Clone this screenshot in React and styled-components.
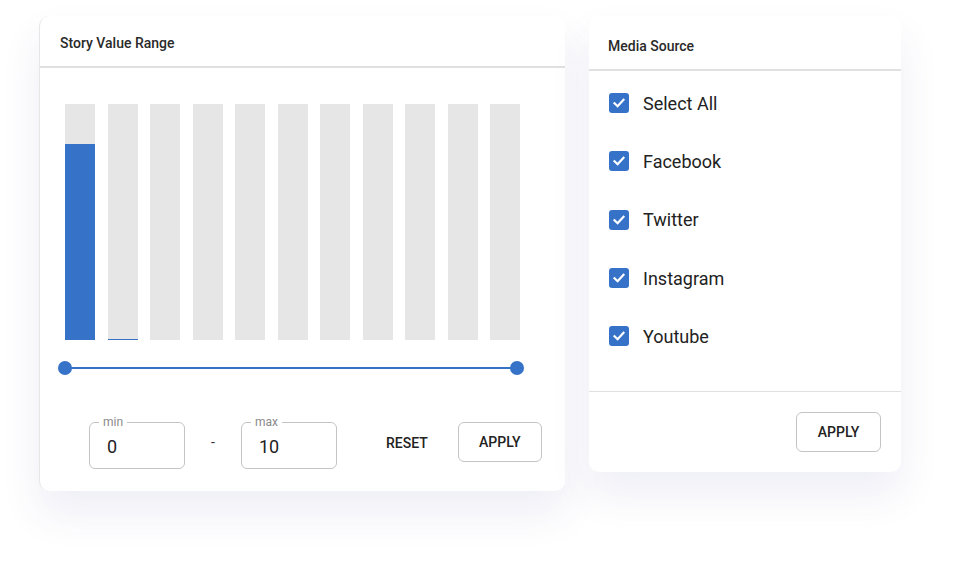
import React from "react";
import styled, { createGlobalStyle } from "styled-components";

const Global = createGlobalStyle`
  html, body { margin: 0; padding: 0; background: #ffffff; }
  body { font-family: Roboto, "Noto Sans", Arial, sans-serif; color: #222; }
  * { box-sizing: border-box; }
`;

const Page = styled.div`
  display: flex;
  align-items: flex-start;
  gap: 24px;
  padding: 16px 0 0 39px;
  width: 963px;
  height: 576px;
`;

const Card = styled.section`
  background: #fff;
  border-radius: 10px;
  width: ${(p) => p.$w}px;
  height: ${(p) => p.$h}px;
  box-shadow: 0 22px 40px rgba(70, 70, 150, 0.09);
  display: flex;
  flex-direction: column;
  border-left: ${(p) => (p.$edge ? "1px solid #e6e6e6" : "none")};
`;

const Header = styled.header`
  height: ${(p) => p.$h}px;
  flex: none;
  display: flex;
  align-items: center;
  padding-left: ${(p) => p.$pl}px;
  padding-top: ${(p) => p.$pt || 0}px;
  border-bottom: 2px solid #e0e0e0;
  font-size: 14px;
  font-weight: 500;
  color: #2a2a2a;
`;

const ChartArea = styled.div`
  padding: 36px 0 0 25px;
  width: 481px;
`;

const Bars = styled.div`
  display: flex;
  justify-content: space-between;
  width: 455px;
  height: 236px;
`;

const Bar = styled.div`
  width: 30px;
  height: 100%;
  background: #e6e6e6;
  display: flex;
  flex-direction: column;
  justify-content: flex-end;
`;

const Fill = styled.div`
  width: 100%;
  background: #3572c8;
`;

const Slider = styled.div`
  position: relative;
  margin-top: 21px;
  width: 452px;
  height: 14px;
  display: flex;
  align-items: center;
`;

const Track = styled.div`
  flex: 1;
  height: 2px;
  background: #3572c8;
`;

const Thumb = styled.span`
  position: absolute;
  top: 0;
  left: ${(p) => p.$x}px;
  width: 14px;
  height: 14px;
  margin-left: -7px;
  border-radius: 50%;
  background: #3572c8;
`;

const Controls = styled.div`
  display: flex;
  align-items: flex-start;
  margin-top: 41px;
  padding-left: 49px;
`;

const Field = styled.fieldset`
  margin: 0;
  padding: 0 0 0 17px;
  width: 96px;
  height: 53px;
  border: 1px solid #c4c4c4;
  border-radius: 6px;
  display: flex;
  align-items: center;
  font-size: 18px;
  color: #222;
`;

const Legend = styled.legend`
  font-size: 12px;
  color: #8a8a8a;
  padding: 0 4px;
  margin-left: -8px;
  line-height: 12px;
`;

const Value = styled.span`
  margin-top: -3px;
`;

const Dash = styled.span`
  width: 56px;
  text-align: center;
  font-size: 14px;
  color: #333;
  margin-top: 18px;
`;

const TextButton = styled.button`
  border: none;
  background: none;
  font-family: inherit;
  font-size: 14px;
  font-weight: 500;
  color: #222;
  padding: 0;
  margin: 19px 30px 0 49px;
`;

const OutlineButton = styled.button`
  width: ${(p) => p.$w}px;
  height: 40px;
  border: 1px solid #c4c4c4;
  border-radius: 6px;
  background: #fff;
  font-family: inherit;
  font-size: 14px;
  font-weight: 500;
  color: #222;
  margin-top: ${(p) => p.$mt || 0}px;
`;

const List = styled.ul`
  list-style: none;
  margin: 0;
  padding: 3px 0 26px 20px;
`;

const Item = styled.li`
  height: 58.3px;
  display: flex;
  align-items: center;
  gap: 14px;
  font-size: 18px;
  color: #222;
`;

const Box = styled.span`
  width: 20px;
  height: 20px;
  border-radius: 3px;
  background: #3572c8;
  display: flex;
  align-items: center;
  justify-content: center;
  flex: none;
`;

const Footer = styled.footer`
  border-top: 1px solid #e0e0e0;
  display: flex;
  justify-content: flex-end;
  padding: 20px 20px 0 0;
`;

const bars = [196 / 236, 1 / 236, 0, 0, 0, 0, 0, 0, 0, 0, 0];
const sources = ["Select All", "Facebook", "Twitter", "Instagram", "Youtube"];

const Check = () => (
  <svg width="14" height="14" viewBox="0 0 14 14">
    <path d="M2.5 7.2 L5.6 10.2 L11.5 3.8" fill="none" stroke="#fff" strokeWidth="2.2" strokeLinecap="square" />
  </svg>
);

export default function App() {
  return (
    <>
      <Global />
      <Page>
        <Card $w={526} $h={475} $edge>
          <Header $h={52} $pl={20} $pt={3}>Story Value Range</Header>
          <ChartArea>
            <Bars>
              {bars.map((v, i) => (
                <Bar key={i}>
                  <Fill style={{ height: `${v * 100}%` }} />
                </Bar>
              ))}
            </Bars>
            <Slider>
              <Track />
              <Thumb $x={0} />
              <Thumb $x={452} />
            </Slider>
          </ChartArea>
          <Controls>
            <Field>
              <Legend>min</Legend>
              <Value>0</Value>
            </Field>
            <Dash>-</Dash>
            <Field>
              <Legend>max</Legend>
              <Value>10</Value>
            </Field>
            <TextButton>RESET</TextButton>
            <OutlineButton $w={84} $mt={6}>APPLY</OutlineButton>
          </Controls>
        </Card>
        <Card $w={312} $h={456}>
          <Header $h={55} $pl={19} $pt={6}>Media Source</Header>
          <List>
            {sources.map((s) => (
              <Item key={s}>
                <Box>
                  <Check />
                </Box>
                {s}
              </Item>
            ))}
          </List>
          <Footer>
            <OutlineButton $w={85}>APPLY</OutlineButton>
          </Footer>
        </Card>
      </Page>
    </>
  );
}
